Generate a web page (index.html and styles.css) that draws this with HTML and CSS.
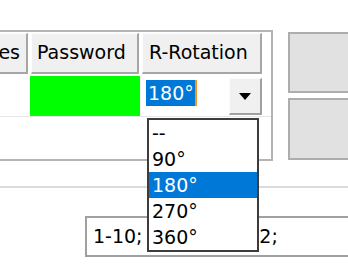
FILE: index.html
```html
<!DOCTYPE html>
<html lang="en">
<head>
    <meta charset="UTF-8"/>
    <title>Rotation grid</title>
    <link rel="stylesheet" href="styles.css">
</head>
<body>
    <div class="top">
        <div class="grid">
            <div class="head-row">
                <div class="head-cell col-a">es</div>
                <div class="head-cell col-b">Password</div>
                <div class="head-cell col-c">R-Rotation</div>
            </div>
            <div class="body-row">
                <div class="cell cell-a"></div>
                <div class="cell cell-green"></div>
                <div class="cell cell-edit">
                    <span class="sel">180°</span><span class="caret"></span>
                    <span class="drop-btn"><span class="arrow"></span></span>
                </div>
            </div>
        </div>
        <div class="side">
            <div class="side-btn"></div>
            <div class="side-btn second"></div>
        </div>
    </div>

    <div class="divider"></div>

    <div class="textbox">1-10; 12-20; 22-32;</div>

    <!-- lista abierta del combo -->
    <ul class="dropdown">
        <li>--</li>
        <li>90°</li>
        <li class="active">180°</li>
        <li>270°</li>
        <li>360°</li>
    </ul>
</body>
</html>
```

FILE: styles.css
```css
html, body {
    margin: 0;
    width: 348px;
    height: 272px;
    overflow: hidden;
    background: #ffffff;
}
body {
    font-family: "DejaVu Sans", Verdana, sans-serif;
    font-size: 19px;
    color: #000;
    position: relative;
}
.top {
    display: flex;
    align-items: flex-start;
    padding-top: 30px;
}
.grid {
    flex-shrink: 0;
    margin-left: -10px;
    width: 279px;
    height: 127px;
    border: 2px solid #b4b4b4;
    background: #fff;
}
.head-row {
    display: flex;
    margin-top: 1px;
    height: 41px;
    gap: 3px;
}
.head-cell {
    flex-shrink: 0;
    box-sizing: border-box;
    height: 41px;
    line-height: 37px;
    background: #f0f0f0;
    border-top: 1px solid #fcfcfc;
    border-left: 1px solid #fcfcfc;
    border-right: 2px solid #a6a6a6;
    border-bottom: 2px solid #a6a6a6;
    white-space: nowrap;
    overflow: hidden;
}
.col-a {
    width: 36px;
    text-align: right;
    padding-right: 6px;
}
.col-b {
    width: 108px;
    padding-left: 5px;
}
.col-c {
    width: 120px;
    padding-left: 6px;
}
.body-row {
    display: flex;
    margin-top: 2px;
    height: 40px;
    border-bottom: 1px solid #e6e6e6;
}
.cell {
    flex-shrink: 0;
}
.cell-a {
    width: 38px;
}
.cell-green {
    width: 110px;
    background: #00ff00;
}
.cell-edit {
    display: flex;
    align-items: flex-start;
    width: 120px;
    margin-left: 2px;
}
.sel {
    margin-top: 4px;
    margin-left: 4px;
    padding: 0 1px 0 2px;
    height: 26px;
    line-height: 26px;
    background: #0078d7;
    color: #fff;
}
.caret {
    margin-top: 4px;
    width: 2px;
    height: 26px;
    background: #f7941d;
}
.drop-btn {
    display: flex;
    align-items: center;
    justify-content: center;
    box-sizing: border-box;
    margin-left: auto;
    margin-top: 2px;
    width: 33px;
    height: 37px;
    background: #f0f0f0;
    border-top: 1px solid #fcfcfc;
    border-left: 1px solid #fcfcfc;
    border-right: 2px solid #a0a0a0;
    border-bottom: 2px solid #a0a0a0;
}
.arrow {
    width: 0;
    height: 0;
    border-left: 6px solid transparent;
    border-right: 6px solid transparent;
    border-top: 7px solid #000;
}
.side {
    flex-shrink: 0;
    display: flex;
    flex-direction: column;
    gap: 5px;
    margin-left: 15px;
    padding-top: 2px;
}
.side-btn {
    box-sizing: border-box;
    width: 80px;
    height: 61px;
    background: #e1e1e1;
    border: 2px solid #adadad;
}
.side-btn.second {
    height: 62px;
}
.divider {
    margin-top: 25px;
    height: 2px;
    background: #dcdcdc;
}
.textbox {
    box-sizing: border-box;
    margin-top: 28px;
    margin-left: 85px;
    width: 300px;
    height: 41px;
    line-height: 37px;
    padding-left: 6px;
    border: 2px solid #a0a0a0;
    white-space: nowrap;
}
.dropdown {
    position: absolute;
    left: 147px;
    top: 118px;
    width: 108px;
    margin: 0;
    padding: 0;
    list-style: none;
    background: #fff;
    border: 2px solid #3c3c3c;
}
.dropdown li {
    height: 26px;
    line-height: 26px;
    padding-left: 3px;
}
.dropdown li.active {
    background: #0078d7;
    color: #fff;
}
```
